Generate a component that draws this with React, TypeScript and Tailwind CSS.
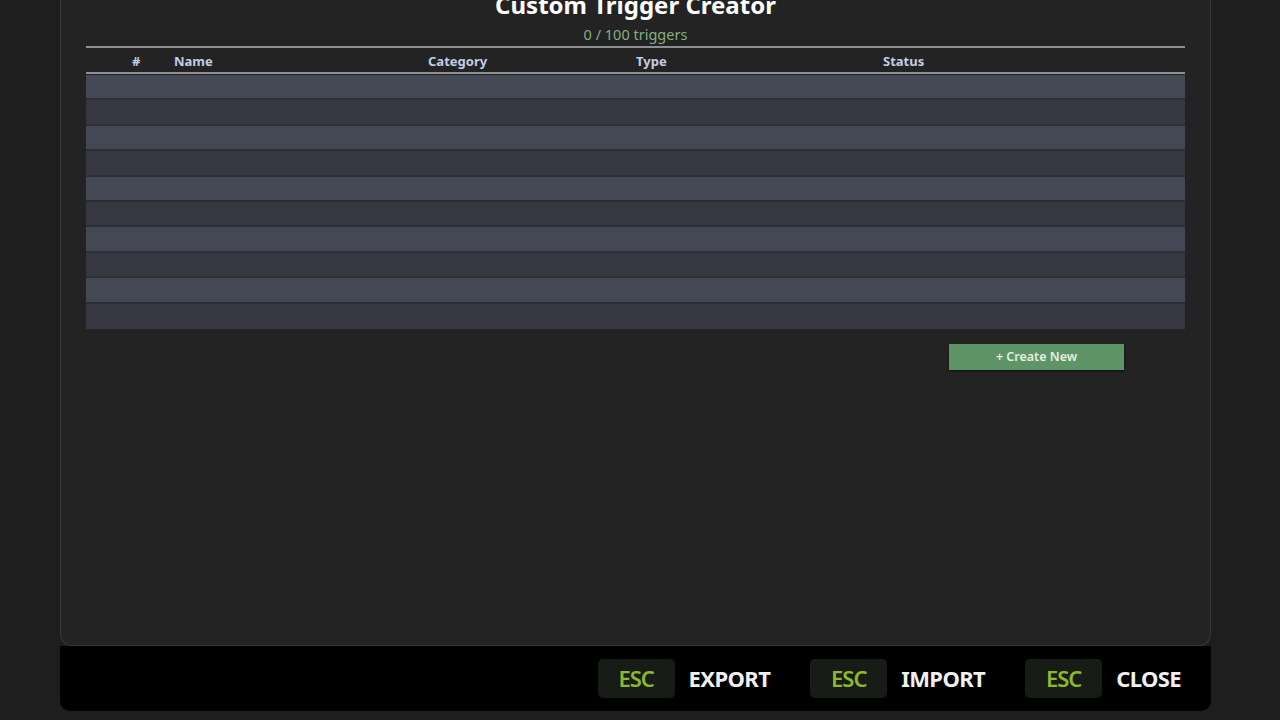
const columns = [
  { label: '#', cls: 'w-[88px] pl-[46px]' },
  { label: 'Name', cls: 'w-[254px]' },
  { label: 'Category', cls: 'w-[208px]' },
  { label: 'Type', cls: 'w-[247px]' },
  { label: 'Status', cls: 'flex-1' },
];

const actions = ['EXPORT', 'IMPORT', 'CLOSE'];

const App = () => {
  const rows = Array.from({ length: 10 }, (_, i) => i);

  return (
    <div
      className="w-[1280px] h-[720px] overflow-hidden bg-[#1e1e1e] pl-[60px] pr-[69px]"
      style={{ fontFamily: '"Noto Sans", "Open Sans", sans-serif' }}
    >
      {/* main panel */}
      <div className="h-[650px] -mt-[4px] bg-[#232323] border border-t-0 border-[#383838] rounded-b-[12px] px-[25px] flex flex-col">
        <div className="text-center text-white font-bold text-[24px] leading-[24px] -mt-[3px]">
          Custom Trigger Creator
        </div>
        <div className="text-center text-[#86ad82] text-[14.5px] leading-[18px] mt-[8px]">0 / 100 triggers</div>

        <div className="mt-[3px] border-t-2 border-[#8c8f94]">
          <div className="flex items-center h-[24px] pt-[4px] text-[13px] font-bold text-[#c3cde6]">
            {columns.map((c) => (
              <div key={c.label} className={c.cls}>
                {c.label}
              </div>
            ))}
          </div>
          <div className="border-t-2 border-[#8c8f94]" />
          <div className="pt-[1px]">
            {rows.map((i) => (
              <div
                key={i}
                className={
                  i % 2 === 0
                    ? 'h-[25.4px] bg-[#434854] border-b-2 border-[#2d2e34]'
                    : 'h-[25.4px] bg-[#363740] border-b-2 border-[#2d2e34] last:border-b-0'
                }
              />
            ))}
          </div>
        </div>

        <div className="flex justify-end pr-[61px] mt-[15px]">
          <button className="w-[175px] h-[26px] bg-[#5e9466] text-[#e3efe2] text-[12.5px] font-semibold shadow-[0_1px_2px_rgba(0,0,0,0.6)]">
            + Create New
          </button>
        </div>
      </div>

      {/* footer bar */}
      <div className="h-[65px] bg-black rounded-b-[10px] flex items-center justify-end pr-[30px] gap-[40px]">
        {actions.map((a) => (
          <div key={a} className="flex items-center gap-[14px]">
            <div className="w-[77px] h-[39px] rounded-[5px] bg-[#171c16] flex items-center justify-center text-[#8cb82c] text-[22px] font-semibold tracking-[-1px]">
              ESC
            </div>
            <span className="text-[#f0f0f0] text-[22px] font-bold tracking-[-0.6px]">{a}</span>
          </div>
        ))}
      </div>
    </div>
  );
};

export default App;
